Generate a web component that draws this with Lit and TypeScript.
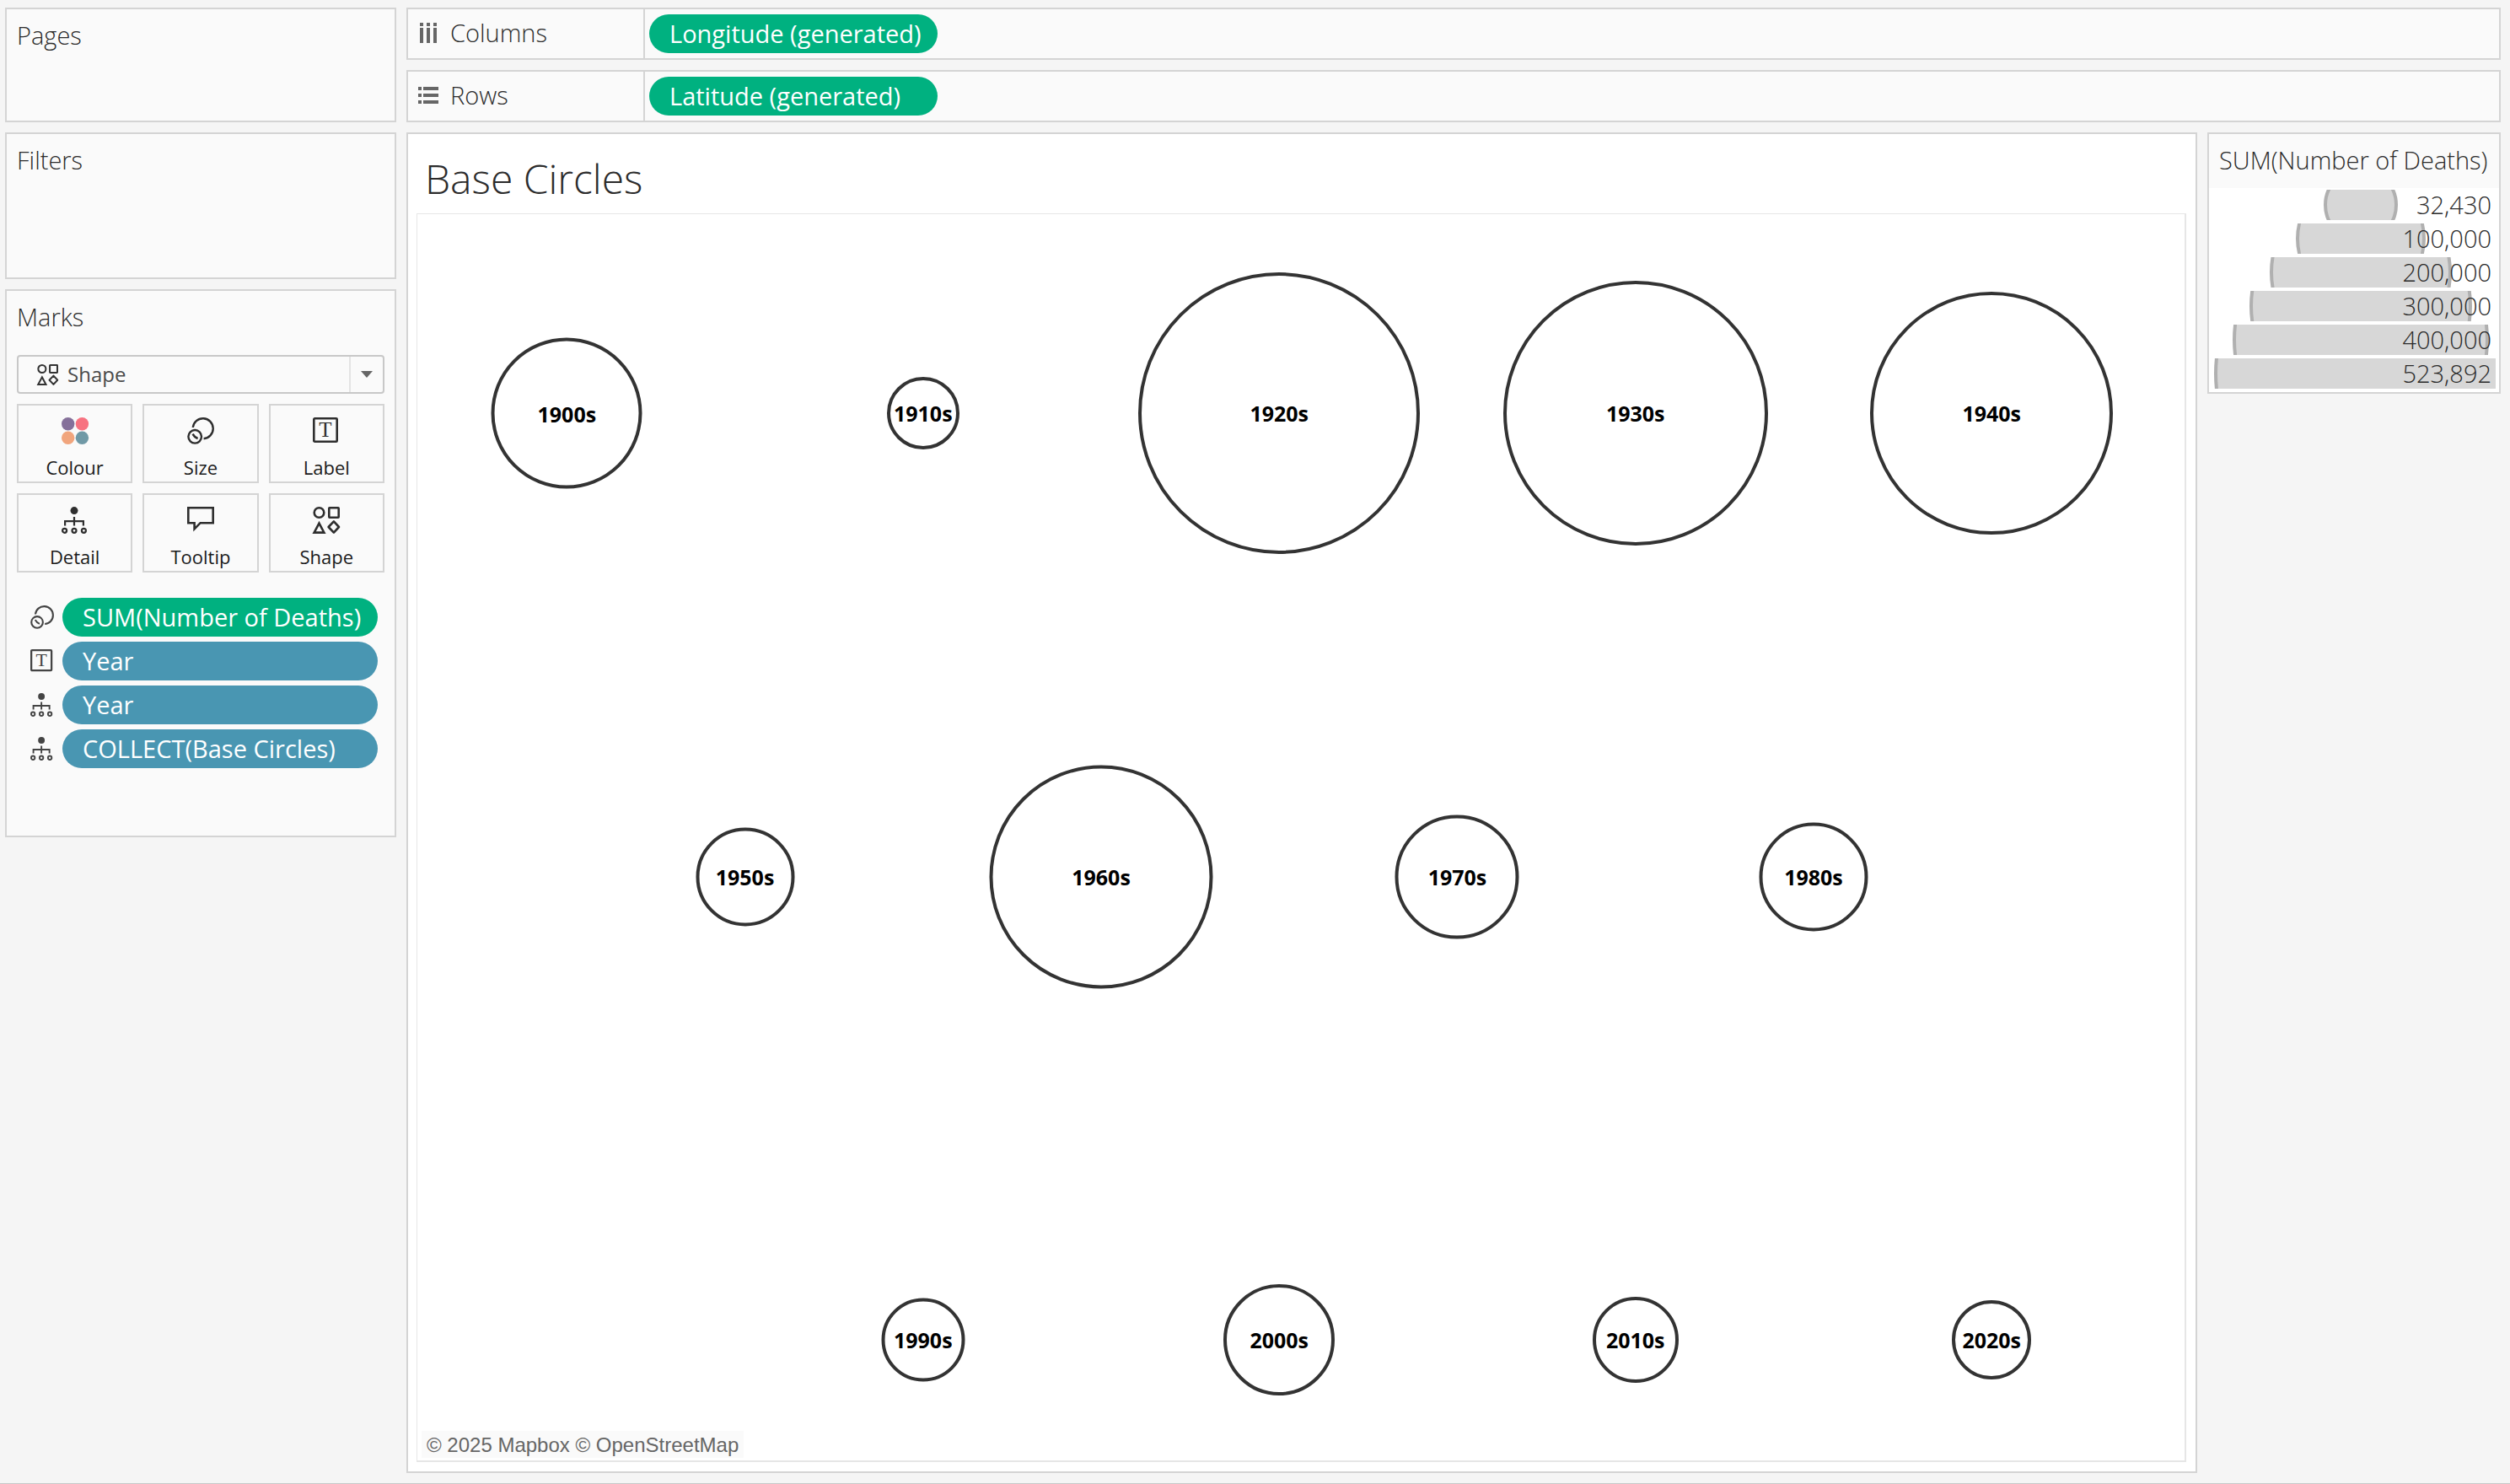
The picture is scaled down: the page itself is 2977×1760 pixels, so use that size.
import { LitElement, html, svg, css, type SVGTemplateResult } from "lit";
import { customElement, property } from "lit/decorators.js";
import { styleMap } from "lit/directives/style-map.js";

/* ---------- Icons ---------- */

const shapeIcon = svg`
  <g fill="none" stroke="currentColor" stroke-width="2.6">
    <circle cx="7.5" cy="7" r="5.8" />
    <rect x="19.3" y="1.3" width="11.4" height="11.4" rx="0.6" />
    <path d="M7.5 19.6 L13.4 30.6 H1.6 Z" />
    <path d="M24.9 17.4 L31 24 L24.9 30.6 L18.6 24 Z" stroke-linejoin="round" />
  </g>`;

const icons: Record<string, SVGTemplateResult> = {
  colour: svg`
    <circle cx="7.7" cy="7.7" r="7.7" fill="#85709a" />
    <circle cx="24.4" cy="7.7" r="7.7" fill="#f77280" />
    <circle cx="7.7" cy="24.3" r="7.7" fill="#f1a57d" />
    <circle cx="24.4" cy="24.3" r="7.7" fill="#7099a6" />`,
  size: svg`
    <g fill="none" stroke="currentColor" stroke-width="2.4">
      <path d="M6.8 12 A12 12 0 1 1 19.6 25.2" />
      <circle cx="9.2" cy="22.8" r="7.8" />
      <path d="M6.6 19.6 Q8.6 23.6 12.6 25" />
    </g>`,
  label: svg`
    <rect x="1.3" y="1.3" width="27.4" height="27.4" rx="1" fill="none" stroke="currentColor" stroke-width="2.6" />
    <text x="15" y="23" text-anchor="middle" font-size="25" font-weight="400" font-family="Liberation Serif, serif" fill="currentColor">T</text>`,
  detail: svg`
    <circle cx="15" cy="4.6" r="4.5" fill="currentColor" />
    <g fill="none" stroke="currentColor" stroke-width="2.2">
      <path d="M15 12 V22.4 M4.1 22.4 V17.2 H25.9 V22.4" />
      <circle cx="3.6" cy="28.3" r="2.5" />
      <circle cx="15" cy="28.3" r="2.5" />
      <circle cx="26.4" cy="28.3" r="2.5" />
    </g>`,
  tooltip: svg`
    <path d="M1.3 1.3 H30.7 V19.2 H15.6 L8.6 26.4 V19.2 H1.3 Z" fill="none" stroke="currentColor" stroke-width="2.6" />`,
  shape: shapeIcon,
  columns: svg`
    <path fill="currentColor" d="M2 0h4v4h-4z M10 0h4v4h-4z M18 0h4v4h-4z M2 6h4v18h-4z M10 6h4v18h-4z M18 6h4v18h-4z" transform="scale(1.3334)" />`,
  rows: svg`
    <path fill="currentColor" d="M0 2h4v4h-4z M6 2h18v4h-18z M0 10h4v4h-4z M6 10h18v4h-18z M0 18h4v4h-4z M6 18h18v4h-18z" transform="scale(1.3334)" />`,
};

@customElement("mark-icon")
export class MarkIcon extends LitElement {
  static styles = css`
    :host { display: block; flex: none; }
    .icon { display: block; width: 100%; height: 100%; overflow: visible; }
  `;
  @property() name = "shape";
  render() {
    return html`<svg class="icon" viewBox="0 0 32 32" aria-hidden="true">${icons[this.name]}</svg>`;
  }
}

/* ---------- Data ---------- */

interface Decade { label: string; step: number; row: number; size: number; }

const decades: Decade[] = [
  { label: "1900s", step: 0, row: 0, size: 179 },
  { label: "1910s", step: 2, row: 0, size: 86 },
  { label: "1920s", step: 4, row: 0, size: 334 },
  { label: "1930s", step: 6, row: 0, size: 314 },
  { label: "1940s", step: 8, row: 0, size: 288 },
  { label: "1950s", step: 1, row: 1, size: 117 },
  { label: "1960s", step: 3, row: 1, size: 265 },
  { label: "1970s", step: 5, row: 1, size: 147 },
  { label: "1980s", step: 7, row: 1, size: 129 },
  { label: "1990s", step: 2, row: 2, size: 99 },
  { label: "2000s", step: 4, row: 2, size: 132 },
  { label: "2010s", step: 6, row: 2, size: 102 },
  { label: "2020s", step: 8, row: 2, size: 94 },
];

const legend = [
  { value: "32,430", radius: 42 },
  { value: "100,000", radius: 75 },
  { value: "200,000", radius: 106 },
  { value: "300,000", radius: 130 },
  { value: "400,000", radius: 150 },
  { value: "523,892", radius: 172 },
];

const cards = [
  { icon: "colour", label: "Colour" },
  { icon: "size", label: "Size" },
  { icon: "label", label: "Label" },
  { icon: "detail", label: "Detail" },
  { icon: "tooltip", label: "Tooltip" },
  { icon: "shape", label: "Shape" },
];

const fields = [
  { icon: "size", label: "SUM(Number of Deaths)", kind: "measure" },
  { icon: "label", label: "Year", kind: "dimension" },
  { icon: "detail", label: "Year", kind: "dimension" },
  { icon: "detail", label: "COLLECT(Base Circles)", kind: "dimension" },
];

const shelves = [
  { icon: "columns", name: "Columns", pill: "Longitude (generated)" },
  { icon: "rows", name: "Rows", pill: "Latitude (generated)" },
];

/* ---------- Page ---------- */

@customElement("app-root")
export class AppRoot extends LitElement {
  static styles = css`
    :host {
      display: block;
      font-family: "Open Sans", "Noto Sans", sans-serif;
      font-size: 29px;
      font-weight: 300;
      line-height: 42px;
      color: #2b2b2b;
    }
    * { box-sizing: border-box; }
    h1, h2, ul { margin: 0; padding: 0; font-weight: inherit; }
    ul { list-style: none; }
    button, select { font: inherit; color: inherit; margin: 0; }

    .page {
      display: grid;
      grid-template-columns: 464px minmax(0, 1fr);
      gap: 12px;
      min-height: 100vh;
      padding: 9px 11px 12px 6px;
      background: #f5f5f5;
      border-bottom: 1px solid #c8c8c8;
    }
    .side, .main { display: flex; flex-direction: column; gap: 12px; }
    .panel { border: 2px solid #d4d4d4; background: #fafafa; }
    .side .panel { padding: 10px 12px; }
    .heading { font-size: 29px; }
    .pages { min-height: 136px; }
    .filters { min-height: 174px; }
    .side .marks { padding-bottom: 80px; }

    .picker {
      display: flex;
      align-items: center;
      position: relative;
      height: 46px;
      margin: 24px 0 12px;
      border: 2px solid #c8c8c8;
      border-radius: 4px;
    }
    .picker-icon { position: absolute; left: 22px; width: 25px; height: 25px; color: #333; pointer-events: none; }
    .picker-select {
      flex: 1;
      height: 42px;
      padding: 0 38px 0 58px;
      border: 0;
      background: none;
      appearance: none;
      color: #4a4a4a;
      font-size: 24px;
      font-weight: 400;
    }
    .picker-arrow {
      position: absolute;
      right: 0;
      top: 0;
      bottom: 0;
      width: 40px;
      display: grid;
      place-items: center;
      border-left: 2px solid #e4e4e4;
      pointer-events: none;
    }

    .cards { display: grid; grid-template-columns: repeat(3, 1fr); gap: 12px; }
    .card {
      display: flex;
      flex-direction: column;
      align-items: center;
      gap: 12px;
      height: 94px;
      padding: 14px 0 2px;
      border: 2px solid #d4d4d4;
      background: none;
      color: #1a1a1a;
      font-size: 22px;
      font-weight: 400;
      line-height: 30px;
    }
    .card-icon { width: 32px; height: 32px; color: #2e2e2e; }

    .fields { display: flex; flex-direction: column; gap: 6px; margin-top: 30px; padding: 0 8px 0 16px; }
    .field { display: flex; align-items: center; gap: 10px; }
    .field-icon { width: 28px; height: 28px; color: #444; }
    .field .pill { flex: 1; min-width: 0; }
    .pill {
      height: 46px;
      padding: 0 12px 0 24px;
      border: 0;
      border-radius: 23px;
      color: #fff;
      font-size: 29px;
      font-weight: 400;
      text-align: left;
      white-space: nowrap;
    }
    .measure { background: #00b180; }
    .dimension { background: #4996b2; }

    .shelf { display: flex; align-items: center; height: 62px; }
    .shelf-name {
      display: flex;
      align-items: center;
      gap: 14px;
      align-self: stretch;
      width: 281px;
      margin-right: 5px;
      padding: 0 0 2px 12px;
      border-right: 2px solid #d4d4d4;
    }
    .shelf-icon { width: 24px; height: 24px; color: #666; }
    .shelf .pill { width: 342px; }

    .content { display: flex; align-items: flex-start; gap: 12px; flex: 1; }
    .sheet {
      display: flex;
      flex-direction: column;
      align-self: stretch;
      flex: 1;
      padding: 0 11px 11px 10px;
      background: #fff;
    }
    .title { padding: 23px 10px 11px; font-size: 48px; line-height: 60px; }
    .map {
      position: relative;
      flex: 1;
      border: solid #e6e6e6;
      border-width: 1px 2px 2px 1px;
    }
    .mark {
      position: absolute;
      display: flex;
      align-items: center;
      justify-content: center;
      border: 4px solid #333;
      border-radius: 50%;
      transform: translate(-50%, -50%);
      color: #000;
      font-size: 25px;
      font-weight: 700;
      line-height: 32px;
    }
    .credit {
      position: absolute;
      left: 5px;
      bottom: 3px;
      padding: 2px 6px 0;
      background: #fafafa;
      color: #666;
      font: 24px/30px "Liberation Sans", Arial, sans-serif;
    }
    .credit-link { color: inherit; text-decoration: none; }

    .legend { width: 348px; }
    .legend-title { padding: 10px 0 12px 12px; white-space: nowrap; }
    .legend-list { display: grid; gap: 4px; padding: 2px 4px 4px; background: #fff; }
    .legend-row { display: grid; height: 36px; }
    .legend-shape { grid-area: 1 / 1; width: 100%; height: 36px; overflow: hidden; }
    .legend-value { grid-area: 1 / 1; padding-right: 5px; text-align: right; line-height: 36px; }
  `;

  private renderMarks() {
    return html`
      <section class="panel marks">
        <h2 class="heading" id="marks-heading">Marks</h2>
        <div class="picker">
          <mark-icon class="picker-icon" name="shape"></mark-icon>
          <select class="picker-select" aria-labelledby="marks-heading">
            <option>Shape</option>
          </select>
          <span class="picker-arrow">
            <svg width="14" height="8" viewBox="0 0 14 8" aria-hidden="true"><path d="M0 0H14L7 8Z" fill="#666" /></svg>
          </span>
        </div>
        <div class="cards">
          ${cards.map((c) => html`
            <button class="card" type="button">
              <mark-icon class="card-icon" name=${c.icon}></mark-icon>
              <span>${c.label}</span>
            </button>`)}
        </div>
        <ul class="fields">
          ${fields.map((f) => html`
            <li class="field">
              <mark-icon class="field-icon" name=${f.icon}></mark-icon>
              <button class="pill ${f.kind}" type="button">${f.label}</button>
            </li>`)}
        </ul>
      </section>`;
  }

  private renderDecade(d: Decade) {
    const place = {
      left: `${8.46 + d.step * 10.078}%`,
      top: `${15.98 + d.row * 37.17}%`,
      width: `${d.size}px`,
      height: `${d.size}px`,
    };
    return html`<div class="mark" style=${styleMap(place)}>${d.label}</div>`;
  }

  render() {
    return html`
      <div class="page">
        <aside class="side">
          <section class="panel pages"><h2 class="heading">Pages</h2></section>
          <section class="panel filters"><h2 class="heading">Filters</h2></section>
          ${this.renderMarks()}
        </aside>
        <main class="main">
          ${shelves.map((s) => html`
            <section class="panel shelf">
              <div class="shelf-name">
                <mark-icon class="shelf-icon" name=${s.icon}></mark-icon>
                <span>${s.name}</span>
              </div>
              <button class="pill measure" type="button">${s.pill}</button>
            </section>`)}
          <div class="content">
            <section class="panel sheet">
              <h1 class="title">Base Circles</h1>
              <div class="map">
                ${decades.map((d) => this.renderDecade(d))}
                <div class="credit"><a class="credit-link" href="#mapbox">© 2025 Mapbox</a> <a class="credit-link" href="#osm">© OpenStreetMap</a></div>
              </div>
            </section>
            <section class="panel legend">
              <h2 class="heading legend-title">SUM(Number of Deaths)</h2>
              <ul class="legend-list">
                ${legend.map((l) => html`
                  <li class="legend-row">
                    <svg class="legend-shape" aria-hidden="true">
                      <circle cx="176" cy="18" r=${l.radius} fill="#d7d7d7" stroke="#b0b0b0" stroke-width="4" />
                    </svg>
                    <span class="legend-value">${l.value}</span>
                  </li>`)}
              </ul>
            </section>
          </div>
        </main>
      </div>`;
  }
}
